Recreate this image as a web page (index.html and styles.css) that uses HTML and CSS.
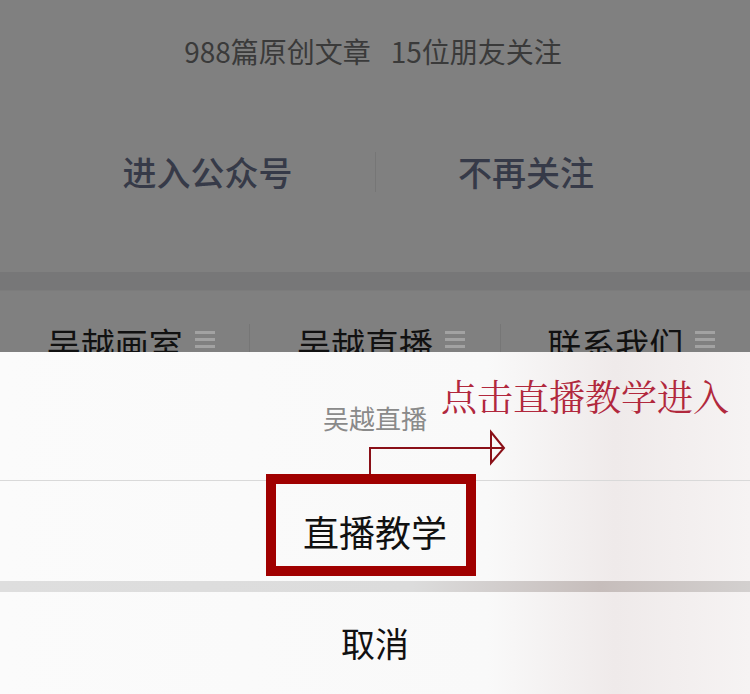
FILE: index.html
```html
<!DOCTYPE html>
<html lang="zh-CN">
<head>
    <meta charset="UTF-8">
    <meta name="viewport" content="width=device-width, initial-scale=1.0">
    <title>吴越直播</title>
    <link rel="stylesheet" href="styles.css">
</head>
<body>
    <section class="profile">
        <p class="stats"><span>988篇原创文章</span><span>15位朋友关注</span></p>
        <div class="actions">
            <div class="action action-left">进入公众号</div>
            <div class="action action-right">不再关注</div>
        </div>
    </section>

    <div class="band"></div>

    <nav class="menu-bar">
        <div class="menu-tab">吴越画室 <svg class="menu-icon" viewBox="0 0 20 20"><rect y="3" width="20" height="3"/><rect y="10" width="20" height="3"/><rect y="17" width="20" height="3"/></svg></div>
        <div class="menu-tab">吴越直播 <svg class="menu-icon" viewBox="0 0 20 20"><rect y="3" width="20" height="3"/><rect y="10" width="20" height="3"/><rect y="17" width="20" height="3"/></svg></div>
        <div class="menu-tab">联系我们 <svg class="menu-icon" viewBox="0 0 20 20"><rect y="3" width="20" height="3"/><rect y="10" width="20" height="3"/><rect y="17" width="20" height="3"/></svg></div>
    </nav>

    <!-- Bottom action sheet -->
    <div class="sheet">
        <div class="sheet-title">吴越直播</div>
        <div class="sheet-item">直播教学</div>
        <div class="sheet-gap"></div>
        <div class="sheet-cancel">取消</div>

        <!-- annotation drawn over the screenshot -->
        <div class="note">点击直播教学进入</div>
        <svg class="note-arrow" viewBox="0 0 750 140">
            <polyline points="370,123 370,96 503,96" />
            <polygon points="491,80 504,96 491,111" />
        </svg>
        <div class="note-box"></div>
    </div>
</body>
</html>
```

FILE: styles.css
```css
body {
    margin: 0;
    padding: 0;
    width: 750px;
    height: 694px;
    overflow: hidden;
    background-color: #808080;
    font-family: "Noto Sans CJK SC", "Noto Sans", sans-serif;
}

.profile {
    height: 272px;
    padding-top: 36px;
    box-sizing: border-box;
}

.stats {
    margin: 0 0 0 -4px;
    display: flex;
    justify-content: center;
    gap: 20px;
    font-size: 28px;
    line-height: 30px;
    color: #3a3a3a;
}

.actions {
    display: flex;
    margin-top: 86px;
    padding-left: 40px;
    height: 40px;
    align-items: center;
}

.action {
    font-size: 34px;
    line-height: 40px;
    font-weight: 500;
    color: #363a48;
    text-align: center;
}

.action-left {
    width: 335px;
    border-right: 1px solid #767676;
}

.action-right {
    width: 300px;
}

.band {
    height: 18px;
    background-color: #777778;
    border-bottom: 1px solid #7c7c7c;
}

.menu-bar {
    display: flex;
    height: 61px;
    padding-top: 37px;
    box-sizing: border-box;
    overflow: hidden;
}

.menu-tab {
    flex: 1;
    display: flex;
    justify-content: center;
    align-items: flex-start;
    gap: 12px;
    padding: 0 0 0 12px;
    margin-top: -4px;
    height: 60px;
    font-size: 34px;
    line-height: 40px;
    color: #111;
    border-right: 1px solid #767676;
}

.menu-tab:last-child {
    border-right: none;
}

.menu-icon {
    width: 20px;
    height: 20px;
    margin-top: 4px;
    fill: #a2a2a2;
    flex-shrink: 0;
}

/* action sheet */
.sheet {
    position: relative;
    height: 342px;
    background: linear-gradient(90deg, #fbfbfb 0%, #f9f9f9 65%, #efeaea 82%, #f6f3f3 100%);
    text-align: center;
}

.sheet-title {
    height: 129px;
    box-sizing: border-box;
    padding-top: 50px;
    font-size: 26px;
    line-height: 32px;
    color: #8a8a8a;
    border-bottom: 1px solid #d9d9d9;
}

.sheet-item {
    height: 100px;
    font-size: 36px;
    line-height: 100px;
    color: #111;
}

.sheet-gap {
    height: 11px;
    background: linear-gradient(90deg, #dedede 0%, #dcdcdc 55%, #c6bdbb 80%, #d3d0cf 100%);
}

.sheet-cancel {
    height: 101px;
    font-size: 34px;
    line-height: 101px;
    color: #111;
}

.note {
    position: absolute;
    left: 441px;
    top: 24px;
    font-family: "Noto Serif CJK SC", "Noto Sans CJK SC", serif;
    font-size: 36px;
    line-height: 40px;
    color: #b1283d;
    white-space: nowrap;
}

.note-arrow {
    position: absolute;
    left: 0;
    top: 0;
    width: 750px;
    height: 140px;
    fill: none;
    stroke: #8a1018;
    stroke-width: 2;
}

.note-box {
    position: absolute;
    left: 266px;
    top: 122px;
    width: 210px;
    height: 102px;
    box-sizing: border-box;
    border: 10px solid #a00000;
}
```
